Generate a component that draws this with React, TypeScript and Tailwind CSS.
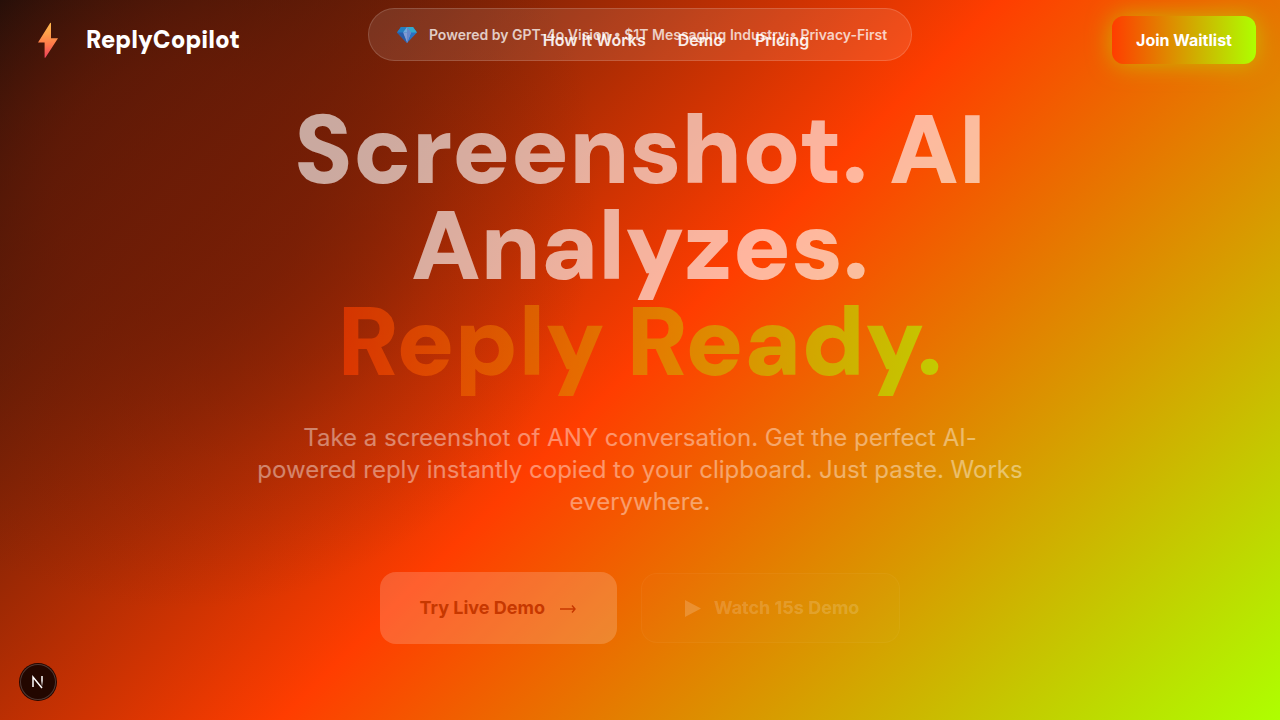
import React from "react";

const display = "font-['DM_Sans',Inter,sans-serif]";

function Bolt() {
  return (
    <svg viewBox="0 0 48 48" className="size-12" aria-hidden="true">
      <defs>
        <linearGradient id="bolt" x1="0" y1="0" x2="0" y2="1">
          <stop offset="0" stopColor="#ffb84d" />
          <stop offset="0.3" stopColor="#ffa04a" />
          <stop offset="0.6" stopColor="#ff7b4a" />
          <stop offset="1" stopColor="#f0405c" />
        </linearGradient>
      </defs>
      <path d="M26 7.200 14 26.600h6.600V41.400c0 .6.6.6.900 0L34 22.200h-7V7.500c0-.6-.6-.9-1-.3Z" fill="url(#bolt)" />
    </svg>
  );
}

function Gem() {
  return (
    <svg viewBox="0 0 24 20" className="h-5 w-6" aria-hidden="true">
      <path d="M8 2h12l4 5.500L14 18 4 7.500Z" fill="#2872c4" />
      <path d="M8 2h6l-4 5.500H4Z" fill="#247fc0" />
      <path d="M14 2h6l4 5.500h-6Z" fill="#32a9cd" />
      <path d="m14 2-4 5.500h8Z" fill="#70a9d8" />
      <path d="M10 7.500h8L14 18Z" fill="#829bd2" />
      <path d="M14 2v16l4-10.500Z" fill="#6687cb" />
      <path d="M4 7.500h6L14 18Z" fill="#285ca9" />
    </svg>
  );
}

export default function App() {
  return (
    <div className="relative min-h-screen overflow-hidden bg-[radial-gradient(circle_420px_at_180px_190px,rgba(112,28,6,0.75)_0%,rgba(112,28,6,0.65)_30%,rgba(112,28,6,0.25)_65%,rgba(112,28,6,0)_100%),linear-gradient(135deg,#0a0a0a_0%,#ff3d00_50%,#aeff00_100%)] font-[Inter,sans-serif] text-white">
      <main className="flex flex-col items-center px-6 pt-2 pb-19 text-center">
        <div className="flex h-[53px] items-center gap-3 rounded-full border border-white/15 bg-white/10 px-6 text-sm leading-5 font-semibold text-white/75">
          <Gem />
          <span>Powered by GPT-4o Vision • $1T Messaging Industry • Privacy-First</span>
        </div>

        <h1 className={`${display} mt-[42px] max-w-4xl text-8xl leading-none font-black text-white/62`}>
          Screenshot. AI Analyzes.
          <span className="block">
            <span className="inline-block bg-[linear-gradient(90deg,#ff3d00,#aeff00)] bg-clip-text pb-3 text-transparent opacity-62">
              Reply Ready.
            </span>
          </span>
        </h1>

        <p className="mt-[19px] max-w-3xl text-2xl leading-8 text-white/42">
          Take a screenshot of ANY conversation. Get the perfect AI-powered reply instantly copied to your clipboard. Just paste. Works everywhere.
        </p>

        <div className="mt-[54px] flex flex-wrap items-center justify-center gap-6">
          <button type="button" className="flex h-18 items-center gap-3 rounded-2xl bg-white/18 px-10 text-lg font-bold text-[#c73800]">
            Try Live Demo
            <svg viewBox="0 0 20 20" className="size-5" fill="none" stroke="currentColor" strokeWidth="1.4" aria-hidden="true">
              <path d="M3 11h15M15 7.500l3 3.500-3 3.500" />
            </svg>
          </button>
          <button type="button" className="flex h-[70px] items-center gap-3 rounded-2xl border border-white/4 bg-white/1 px-10 text-lg font-bold text-white/18">
            <svg viewBox="0 0 20 20" className="size-5" fill="currentColor" aria-hidden="true">
              <path d="M3 2v17l16-8.500Z" />
            </svg>
            Watch 15s Demo
          </button>
        </div>
      </main>

      <header className="absolute inset-x-0 top-0 flex h-20 items-center justify-between px-6">
        <a href="#top" className="flex items-center gap-3.5">
          <Bolt />
          <span className={`${display} text-2xl font-black`}>ReplyCopilot</span>
        </a>
        <nav className="flex gap-8 font-semibold text-white/90">
          <a href="#how">How It Works</a>
          <a href="#demo">Demo</a>
          <a href="#pricing">Pricing</a>
        </nav>
        <button type="button" className="h-12 rounded-xl bg-[linear-gradient(90deg,#ff3d00,#aeff00)] px-6 font-bold shadow-[0_0_24px_rgba(174,255,0,0.5)]">
          Join Waitlist
        </button>
      </header>

      <button type="button" aria-label="Open developer tools" className="fixed bottom-5 left-5 flex size-9 items-center justify-center rounded-full border border-white/20 bg-[#230700] shadow-[0_0_0_1px_#230700]">
        <svg viewBox="0 0 16 16" className="size-4" fill="none" aria-hidden="true">
          <defs>
            <linearGradient id="stem" x1="0" y1="2" x2="0" y2="14" gradientUnits="userSpaceOnUse">
              <stop offset="0.4" stopColor="#fff" />
              <stop offset="0.9" stopColor="#fff" stopOpacity="0" />
            </linearGradient>
          </defs>
          <path d="M3 13V3l9 11" stroke="#fff" strokeWidth="1.500" />
          <path d="M12 2v11" stroke="url(#stem)" strokeWidth="1.500" />
        </svg>
      </button>
    </div>
  );
}
